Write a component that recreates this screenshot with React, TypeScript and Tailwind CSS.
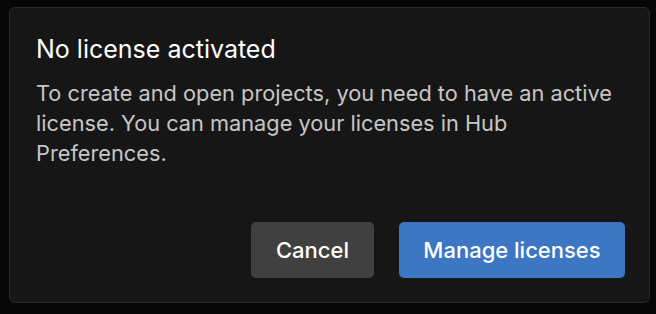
import React from "react";

export default function App() {
	return (
		<div
			className="w-[656px] h-[314px] bg-[#060606] pl-[9px] pt-[7px]"
			style={{ fontFamily: "Inter, 'Noto Sans', sans-serif" }}
		>
			<div className="w-[641px] h-[296px] rounded-[6px] border border-[#2a2a2a] bg-[#161616] flex flex-col">
				<div className="pl-[26px] pr-[28px] pt-[25px]">
					<h2 className="text-[25px] leading-[32px] text-white font-normal">No license activated</h2>
					<p className="mt-[13px] text-[21.75px] leading-[30px] text-[#c6c6c6]">
						To create and open projects, you need to have an active license. You can manage your licenses in Hub
						Preferences.
					</p>
				</div>
				<div className="mt-auto flex justify-end gap-[25px] pr-[24px] pb-[24px]">
					<button
						type="button"
						className="w-[123px] h-[56px] rounded-[5px] bg-[#404040] text-white text-[22px] font-medium"
					>
						Cancel
					</button>
					<button
						type="button"
						className="w-[226px] h-[56px] rounded-[5px] bg-[#3d76c2] text-white text-[22px] font-medium"
					>
						Manage licenses
					</button>
				</div>
			</div>
		</div>
	);
}
